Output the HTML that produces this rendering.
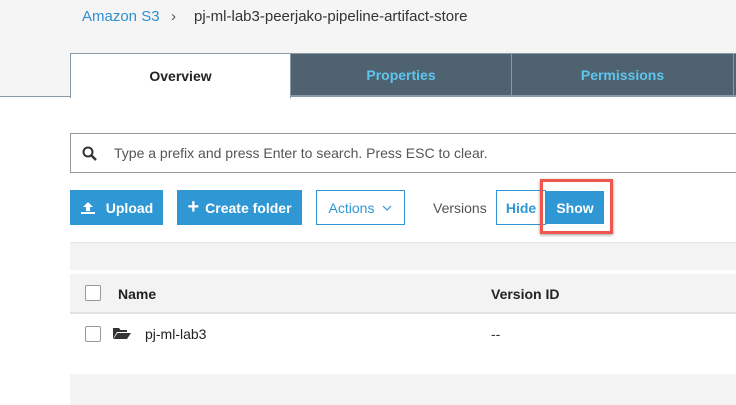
<html><head><style>
body{margin:0;width:736px;height:405px;overflow:hidden;background:#fff;font-family:"Liberation Sans",sans-serif;position:relative}
div{position:absolute;box-sizing:border-box}
.btn{top:190px;height:35px;font-size:14px;font-weight:bold;display:flex;align-items:center;justify-content:center}
.blue{background:#2f98d4;color:#fff}
.ol{border:1px solid #2f98d4;color:#2f98d4;background:#fff}
.cb{width:16px;height:16px;border:1px solid #999;border-radius:2px;background:#fff}
</style></head><body>
<div style="left:0;top:0;width:736px;height:97px;background:#f5f5f5"></div>
<div style="left:82px;top:8px;font-size:15px;color:#2f8fcf">Amazon S3</div>
<div style="left:171px;top:8px;font-size:15px;color:#555">›</div>
<div style="left:194px;top:8px;font-size:15px;color:#333">pj-ml-lab3-peerjako-pipeline-artifact-store</div>
<div style="left:0;top:96px;width:736px;height:1px;background:#8a99a6"></div>
<div style="left:70px;top:53px;width:221px;height:45px;background:#fff;border:1px solid #8a99a6;border-bottom:none;font-size:14px;font-weight:bold;color:#222;display:flex;align-items:center;justify-content:center">Overview</div>
<div style="left:290px;top:53px;width:222px;height:43px;background:#4f6270;border:1px solid #8a99a6;font-size:14px;font-weight:bold;color:#5dc6ee;display:flex;align-items:center;justify-content:center">Properties</div>
<div style="left:511px;top:53px;width:223px;height:43px;background:#4f6270;border:1px solid #8a99a6;font-size:14px;font-weight:bold;color:#5dc6ee;display:flex;align-items:center;justify-content:center">Permissions</div>
<div style="left:733px;top:53px;width:10px;height:43px;background:#4f6270;border:1px solid #8a99a6"></div>
<div style="left:70px;top:133px;width:680px;height:40px;border:1px solid #999;background:#fff"></div>
<svg style="position:absolute;left:82px;top:146px" width="16" height="16"><circle cx="6" cy="6" r="4.5" fill="none" stroke="#333" stroke-width="2"/><line x1="9.5" y1="9.5" x2="14" y2="14" stroke="#333" stroke-width="2.5"/></svg>
<div style="left:114px;top:145px;font-size:14px;color:#555">Type a prefix and press Enter to search. Press ESC to clear.</div>
<div class="btn blue" style="left:70px;width:93px"><svg width="16" height="14" style="margin-right:10px"><path d="M8 1 L3 6 H6 V10 H10 V6 H13 Z" fill="#fff"/><rect x="1" y="11" width="14" height="2" fill="#fff"/></svg>Upload</div>
<div class="btn blue" style="left:177px;width:125px"><span style="font-size:20px;margin-right:6px">+</span>Create folder</div>
<div class="btn ol" style="left:316px;width:89px;font-weight:normal">Actions<svg width="10" height="6" style="margin-left:8px"><path d="M1 1 L5 5 L9 1" fill="none" stroke="#2f98d4" stroke-width="1.2"/></svg></div>
<div style="left:433px;top:200px;font-size:14px;color:#555">Versions</div>
<div class="btn ol" style="left:496px;width:50px">Hide</div>
<div style="left:540px;top:179px;width:73px;height:55px;border:3px solid #f0574c;box-shadow:0 1px 3px rgba(0,0,0,.4)"></div>
<div class="btn blue" style="left:546px;width:58px;top:191px;height:33px">Show</div>
<div style="left:70px;top:242px;width:680px;height:28px;background:#f3f3f3;border-top:1px solid #e5e5e5"></div>
<div style="left:70px;top:274px;width:680px;height:40px;background:#f3f3f3;border-bottom:2px solid #e3e3e3"></div>
<div class="cb" style="left:85px;top:285px"></div>
<div style="left:118px;top:286px;font-size:14px;font-weight:bold;color:#222">Name</div>
<div style="left:491px;top:286px;font-size:14px;font-weight:bold;color:#222">Version ID</div>
<div class="cb" style="left:85px;top:326px"></div>
<svg style="position:absolute;left:113px;top:327px" width="18" height="13"><path d="M0 1 H6 L7.5 3 H14 V5 H4 L0 12 Z M4.5 6 H18 L14 12 H0.5 Z" fill="#333"/></svg>
<div style="left:145px;top:326px;font-size:14px;color:#222">pj-ml-lab3</div>
<div style="left:491px;top:326px;font-size:14px;color:#333">--</div>
<div style="left:70px;top:374px;width:680px;height:31px;background:#f3f3f3"></div>
</body></html>
